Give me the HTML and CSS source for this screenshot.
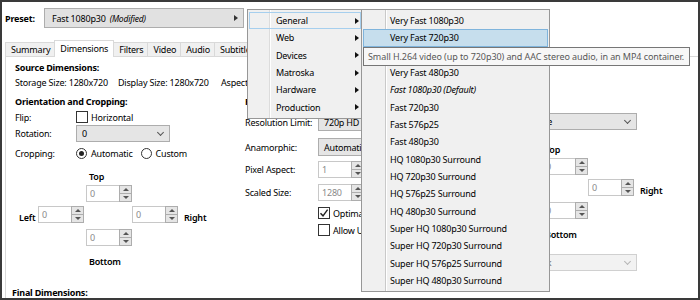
FILE: index.html
```html
<!DOCTYPE html>
<html lang="en">
<head>
    <meta charset="UTF-8">
    <meta name="viewport" content="width=device-width, initial-scale=1.0">
    <link rel="stylesheet" href="styles.css">
</head>
<body>
    <div class="window">
        <div class="preset-row">
            <span class="preset-label">Preset:</span>
            <div class="preset-select">
                <span>Fast 1080p30</span>
                <em class="modified">(Modified)</em>
                <span class="arrow-right"></span>
            </div>
        </div>

        <div class="tabs">
            <div class="tab">Summary</div>
            <div class="tab active">Dimensions</div>
            <div class="tab">Filters</div>
            <div class="tab">Video</div>
            <div class="tab">Audio</div>
            <div class="tab">Subtitles</div>
            <div class="tab">Chapters</div>
        </div>

        <div class="panel">
            <div class="heading">Source Dimensions:</div>
            <div class="source-info">
                <span>Storage Size: 1280x720</span>
                <span>Display Size: 1280x720</span>
                <span>Aspect Ratio: 16:9</span>
            </div>

            <div class="columns">
                <!-- orientation and cropping -->
                <div class="col col-crop">
                    <div class="heading">Orientation and Cropping:</div>
                    <div class="row row-flip">
                        <span class="row-label">Flip:</span>
                        <span class="checkbox"></span>
                        <span class="check-text">Horizontal</span>
                    </div>
                    <div class="row row-combo">
                        <span class="row-label">Rotation:</span>
                        <div class="combo combo-rotation"><span>0</span><span class="chevron"></span></div>
                    </div>
                    <div class="row row-radio">
                        <span class="row-label">Cropping:</span>
                        <span class="radio checked"></span>
                        <span class="radio-text">Automatic</span>
                        <span class="radio"></span>
                        <span class="radio-text">Custom</span>
                    </div>
                    <div class="crop-grid">
                        <span class="side-label label-top">Top</span>
                        <div class="spin spin-top"><span class="spin-val">0</span><span class="spin-btns"><i class="up"></i><i class="down"></i></span></div>
                        <span class="side-label label-left">Left</span>
                        <div class="spin spin-left"><span class="spin-val">0</span><span class="spin-btns"><i class="up"></i><i class="down"></i></span></div>
                        <div class="spin spin-right"><span class="spin-val">0</span><span class="spin-btns"><i class="up"></i><i class="down"></i></span></div>
                        <span class="side-label label-right">Right</span>
                        <div class="spin spin-bottom"><span class="spin-val">0</span><span class="spin-btns"><i class="up"></i><i class="down"></i></span></div>
                        <span class="side-label label-bottom">Bottom</span>
                    </div>
                </div>

                <!-- resolution and scaling -->
                <div class="col col-scale">
                    <div class="heading">Resolution and Scaling:</div>
                    <div class="row row-res">
                        <span class="row-label wide">Resolution Limit:</span>
                        <div class="combo combo-wide"><span>720p HD</span><span class="chevron"></span></div>
                    </div>
                    <div class="row row-ana">
                        <span class="row-label wide">Anamorphic:</span>
                        <div class="combo combo-wide"><span>Automatic</span><span class="chevron"></span></div>
                    </div>
                    <div class="row row-par">
                        <span class="row-label wide">Pixel Aspect:</span>
                        <div class="spin"><span class="spin-val">1</span><span class="spin-btns"><i class="up"></i><i class="down"></i></span></div>
                    </div>
                    <div class="row row-size">
                        <span class="row-label wide">Scaled Size:</span>
                        <div class="spin"><span class="spin-val">1280</span><span class="spin-btns"><i class="up"></i><i class="down"></i></span></div>
                    </div>
                    <div class="row row-opt">
                        <span class="checkbox checked"><svg width="10" height="10" viewBox="0 0 10 10"><path d="M1.5 5.2 L4 7.8 L8.6 1.6" fill="none" stroke="#222" stroke-width="1.4"/></svg></span>
                        <span class="check-text">Optimal Size</span>
                    </div>
                    <div class="row row-up">
                        <span class="checkbox"></span>
                        <span class="check-text">Allow Upscaling</span>
                    </div>
                </div>

                <!-- borders -->
                <div class="col col-borders">
                    <div class="heading">Borders:</div>
                    <div class="row row-fill">
                        <span class="row-label short">Fill:</span>
                        <div class="combo combo-fill"><span>None</span><span class="chevron"></span></div>
                    </div>
                    <div class="crop-grid border-grid">
                        <span class="side-label label-top">Top</span>
                        <div class="spin spin-top"><span class="spin-val">0</span><span class="spin-btns"><i class="up"></i><i class="down"></i></span></div>
                        <span class="side-label label-left">Left</span>
                        <div class="spin spin-left"><span class="spin-val">0</span><span class="spin-btns"><i class="up"></i><i class="down"></i></span></div>
                        <div class="spin spin-right"><span class="spin-val">0</span><span class="spin-btns"><i class="up"></i><i class="down"></i></span></div>
                        <span class="side-label label-right">Right</span>
                        <div class="spin spin-bottom"><span class="spin-val">0</span><span class="spin-btns"><i class="up"></i><i class="down"></i></span></div>
                        <span class="side-label label-bottom">Bottom</span>
                    </div>
                    <div class="row row-colour">
                        <span class="row-label short">Colour:</span>
                        <div class="combo combo-fill disabled"><span>Black</span><span class="chevron"></span></div>
                    </div>
                </div>
            </div>

            <div class="heading final">Final Dimensions:</div>
        </div>

        <!-- preset menu -->
        <div class="menu menu-main">
            <div class="menu-item sub open">General</div>
            <div class="menu-item sub">Web</div>
            <div class="menu-item sub">Devices</div>
            <div class="menu-item sub">Matroska</div>
            <div class="menu-item sub">Hardware</div>
            <div class="menu-item sub">Production</div>
        </div>

        <div class="menu menu-general">
            <div class="menu-item">Very Fast 1080p30</div>
            <div class="menu-item hover">Very Fast 720p30</div>
            <div class="menu-item">Very Fast 576p25</div>
            <div class="menu-item">Very Fast 480p30</div>
            <div class="menu-item default">Fast 1080p30 (Default)</div>
            <div class="menu-item">Fast 720p30</div>
            <div class="menu-item">Fast 576p25</div>
            <div class="menu-item">Fast 480p30</div>
            <div class="menu-item">HQ 1080p30 Surround</div>
            <div class="menu-item">HQ 720p30 Surround</div>
            <div class="menu-item">HQ 576p25 Surround</div>
            <div class="menu-item">HQ 480p30 Surround</div>
            <div class="menu-item">Super HQ 1080p30 Surround</div>
            <div class="menu-item">Super HQ 720p30 Surround</div>
            <div class="menu-item">Super HQ 576p25 Surround</div>
            <div class="menu-item">Super HQ 480p30 Surround</div>
        </div>

        <div class="tooltip">Small H.264 video (up to 720p30) and AAC stereo audio, in an MP4 container.</div>
    </div>
</body>
</html>
```

FILE: styles.css
```css
* {
    box-sizing: border-box;
}
body {
    margin: 0;
    font-family: "Noto Sans", "Open Sans", sans-serif;
    font-size: 9px;
    letter-spacing: -0.2px;
    color: #000;
}
.window {
    position: relative;
    width: 700px;
    height: 300px;
    border: 2px solid #3a3a3a;
    background: #fff;
    overflow: hidden;
}

/* preset row */
.preset-row {
    display: flex;
    align-items: center;
    height: 20px;
    margin-top: 6px;
    padding-left: 3px;
}
.preset-label {
    width: 39px;
    font-weight: 700;
}
.preset-select {
    display: flex;
    align-items: center;
    width: 200px;
    height: 20px;
    padding-left: 7px;
    border: 1px solid #adadad;
    background: #e1e1e1;
}
.modified {
    margin-left: 4px;
    font-size: 8.5px;
}
.arrow-right {
    margin-left: auto;
    margin-right: 5px;
    border-left: 4px solid #333;
    border-top: 3.5px solid transparent;
    border-bottom: 3.5px solid transparent;
}

/* tabs */
.tabs {
    display: flex;
    align-items: flex-end;
    height: 16px;
    margin-top: 12px;
    padding-left: 3px;
}
.tab {
    height: 14px;
    line-height: 13px;
    padding: 0 4px 0 5px;
    margin-right: -1px;
    border: 1px solid #d9d9d9;
    border-bottom: none;
    background: #f0f0f0;
}
.tab.active {
    position: relative;
    z-index: 1;
    height: 17px;
    line-height: 15px;
    padding: 0 5px;
    margin-bottom: -1px;
    background: #fff;
}

/* tab panel */
.panel {
    height: 246px;
    margin-left: 3px;
    margin-right: -4px;
    padding: 4px 0 0 9px;
    border: 1px solid #d9d9d9;
    background: #fff;
}
.heading {
    height: 13px;
    line-height: 13px;
    font-weight: 700;
}
.heading.final {
    margin-left: -3px;
}
.source-info {
    display: flex;
    margin-top: 2px;
    line-height: 13px;
}
.source-info span {
    width: 103px;
    white-space: nowrap;
}
.columns {
    display: flex;
    height: 191px;
    margin-top: 6px;
}
.col-crop {
    width: 230px;
}
.col-scale {
    width: 226px;
}
.col-borders {
    width: 230px;
}

/* rows */
.row {
    display: flex;
    align-items: center;
    white-space: nowrap;
}
.row-label {
    width: 61px;
}
.row-label.wide {
    width: 73px;
}
.row-label.short {
    width: 53px;
}
.row-flip {
    height: 14px;
    margin-top: 2px;
}
.row-combo {
    height: 17px;
    margin-top: 1px;
}
.row-radio {
    height: 14px;
    margin-top: 4px;
}
.row-res {
    height: 18px;
    margin-top: 5px;
}
.row-ana {
    height: 18px;
    margin-top: 7px;
}
.row-par {
    height: 17px;
    margin-top: 5px;
}
.row-size {
    height: 17px;
    margin-top: 6px;
}
.row-opt {
    height: 12px;
    margin-top: 6px;
    padding-left: 73px;
}
.row-up {
    height: 12px;
    margin-top: 5px;
    padding-left: 73px;
}
.row-fill {
    height: 17px;
    margin-top: 5px;
}
.row-colour {
    height: 17px;
    margin-top: 13px;
}

/* checkbox / radio */
.checkbox {
    display: flex;
    align-items: center;
    justify-content: center;
    width: 12px;
    height: 12px;
    border: 1px solid #333;
    background: #fff;
}
.check-text {
    margin-left: 3px;
}
.radio {
    display: flex;
    align-items: center;
    justify-content: center;
    width: 11px;
    height: 11px;
    border: 1px solid #333;
    border-radius: 50%;
    background: #fff;
}
.radio.checked::after {
    content: "";
    width: 5px;
    height: 5px;
    border-radius: 50%;
    background: #222;
}
.radio-text {
    margin-left: 4px;
    margin-right: 8px;
}

/* combobox */
.combo {
    display: flex;
    align-items: center;
    justify-content: space-between;
    height: 17px;
    padding: 0 6px 0 5px;
    border: 1px solid #adadad;
    background: #e5e5e5;
}
.combo-rotation {
    width: 94px;
}
.combo-wide {
    width: 110px;
    height: 18px;
}
.combo-fill {
    width: 113px;
}
.combo.disabled {
    border-color: #d0d0d0;
    background: #f2f2f2;
    color: #6d6d6d;
}
.chevron {
    width: 5px;
    height: 5px;
    margin-top: -3px;
    border-right: 1px solid #555;
    border-bottom: 1px solid #555;
    transform: rotate(45deg);
}
.combo.disabled .chevron {
    border-color: #b5b5b5;
}

/* spin boxes */
.spin {
    display: flex;
    width: 46px;
    height: 17px;
    border: 1px solid #c8c8c8;
    background: #fff;
}
.spin-val {
    flex: 1;
    padding-left: 3px;
    line-height: 15px;
    color: #8a8a8a;
}
.spin-btns {
    display: flex;
    flex-direction: column;
    width: 13px;
    margin: -1px -1px -1px 0;
}
.spin-btns i {
    display: flex;
    align-items: center;
    justify-content: center;
    flex: 1;
    border: 1px solid #adadad;
    background: #e5e5e5;
}
.spin-btns i + i {
    margin-top: -1px;
}
.spin-btns .up::after {
    content: "";
    border-bottom: 3px solid #555;
    border-left: 3px solid transparent;
    border-right: 3px solid transparent;
}
.spin-btns .down::after {
    content: "";
    border-top: 3px solid #555;
    border-left: 3px solid transparent;
    border-right: 3px solid transparent;
}

/* crop / border grid */
.crop-grid {
    display: grid;
    grid-template-columns: 23px 48px 46px 46px auto;
    grid-template-rows: 15px 21px 23px 21px 18px;
    align-items: start;
    margin-top: 10px;
}
.border-grid {
    margin-top: 13px;
}
.side-label {
    line-height: 13px;
    font-weight: 600;
}
.label-top {
    grid-column: 3;
    grid-row: 1;
    padding-left: 3px;
}
.spin-top {
    grid-column: 3;
    grid-row: 2;
}
.label-left {
    grid-column: 1;
    grid-row: 3;
    align-self: center;
    padding-left: 4px;
}
.spin-left {
    grid-column: 2;
    grid-row: 3;
}
.spin-right {
    grid-column: 4;
    grid-row: 3;
}
.label-right {
    grid-column: 5;
    grid-row: 3;
    align-self: center;
    padding-left: 6px;
}
.spin-bottom {
    grid-column: 3;
    grid-row: 4;
}
.label-bottom {
    grid-column: 3 / span 2;
    grid-row: 5;
    align-self: end;
    padding-left: 3px;
}

/* menus */
.menu {
    position: absolute;
    padding: 2px 1px;
    border: 1px solid #979797;
    background: #f0f0f0;
    white-space: nowrap;
}
.menu-main {
    left: 245px;
    top: 7px;
    width: 116px;
    background: linear-gradient(to right, #f0f0f0 21px, #dcdcdc 21px, #dcdcdc 22px, #fff 22px, #fff 23px, #f0f0f0 23px);
}
.menu-general {
    left: 359px;
    top: 7px;
    width: 189px;
    background: linear-gradient(to right, #f0f0f0 23px, #c9c9c9 23px, #c9c9c9 24px, #fff 24px, #fff 25px, #f0f0f0 25px);
}
.menu-item {
    display: flex;
    align-items: center;
    height: 17.33px;
    padding-left: 27px;
}
.menu-item.sub::after {
    content: "";
    margin-left: auto;
    margin-right: 2px;
    border-left: 4px solid #111;
    border-top: 3.5px solid transparent;
    border-bottom: 3.5px solid transparent;
}
.menu-item.open {
    box-shadow: inset 0 0 0 1px #a6cfee;
}
.menu-item.hover {
    background: #c6deed;
    box-shadow: inset 0 0 0 1px #7fb4dc;
}
.menu-item.default {
    font-style: italic;
}

.tooltip {
    position: absolute;
    left: 361px;
    top: 45px;
    width: 327px;
    height: 19px;
    padding-left: 4px;
    line-height: 17px;
    letter-spacing: -0.08px;
    border: 1px solid #767676;
    background: #f7f7f7;
    color: #575757;
    white-space: nowrap;
}
```
